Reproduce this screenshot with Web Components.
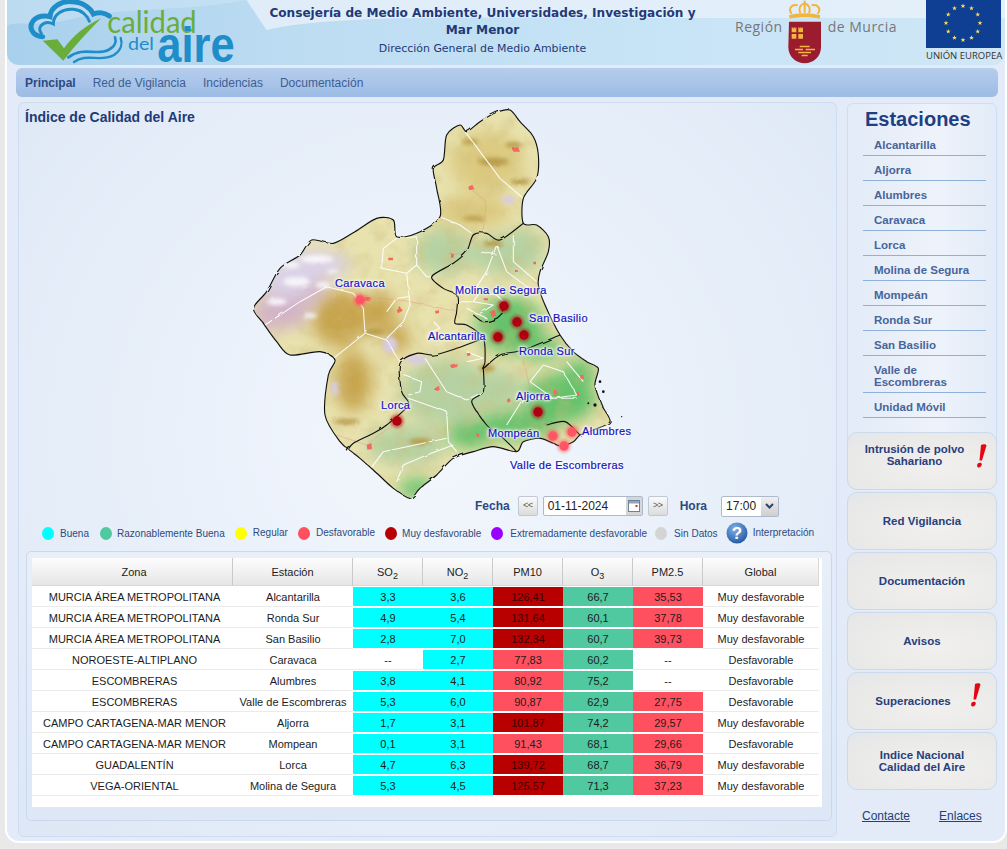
<!DOCTYPE html>
<html lang="es">
<head>
<meta charset="utf-8">
<title>Calidad del Aire</title>
<style>
  html, body { margin: 0; padding: 0; background: #e9e9e9; overflow: hidden; }
  body { font-family: "Liberation Sans", Arial, sans-serif; font-size: 12px; color: #222; height: 849px; }
</style>
</head>
<body>
<page-frame>
  <site-header></site-header>
  <site-nav></site-nav>
  <div style="display:flex;margin:5px 0 0 11px;gap:9px">
    <main-panel>
      <air-map></air-map>
      <date-bar></date-bar>
      <air-legend></air-legend>
      <air-table></air-table>
    </main-panel>
    <side-bar>
      <station-list></station-list>
      <side-button style="align-items:flex-start;padding:10px 15px 0 0">Intrusión de polvo<br>Sahariano<alert-mark style="right:9px;top:11px"></alert-mark></side-button>
      <side-button>Red Vigilancia</side-button>
      <side-button>Documentación</side-button>
      <side-button>Avisos</side-button>
      <side-button style="padding-right:18px">Superaciones<alert-mark style="right:15px;top:10px"></alert-mark></side-button>
      <side-button>Indice Nacional<br>Calidad del Aire</side-button>
      <foot-links></foot-links>
    </side-bar>
  </div>
</page-frame>

<script>
class PageFrame extends HTMLElement {
  constructor() {
    super();
    this.attachShadow({ mode: 'open' });
    this.shadowRoot.innerHTML = `
      <style>
        :host { display: block; margin-left: 5px; width: 1002px; height: 843px; box-sizing: border-box;
          background: #e2ebf7; border: 2px solid #fff; border-top: 0; border-radius: 0 0 14px 14px; overflow: hidden; }
      </style>
      <slot></slot>`;
  }
}

class SiteHeader extends HTMLElement {
  constructor() {
    super();
    this.attachShadow({ mode: 'open' });
    let stars = '';
    for (let i = 0; i < 12; i++) {
      const a = i * Math.PI / 6;
      const cx = 37 + 17 * Math.sin(a), cy = 23 - 17 * Math.cos(a);
      let pts = [];
      for (let k = 0; k < 10; k++) {
        const r = k % 2 ? 1 : 2.5, b = k * Math.PI / 5;
        pts.push((cx + r * Math.sin(b)).toFixed(1) + ',' + (cy - r * Math.cos(b)).toFixed(1));
      }
      stars += `<polygon points="${pts.join(' ')}"/>`;
    }
    this.shadowRoot.innerHTML = `
      <style>
        :host { display: flex; height: 65px; position: relative; border-radius: 0 0 12px 12px;
          background: linear-gradient(90deg, #a8d0ec 0, #bcdcf2 28%, #c6e3f6 60%, #cfe7f7 100%); }
        .sky { position: absolute; inset: 0; width: 100%; height: 100%; }
        .logo { position: relative; width: 233px; height: 65px; flex: none; overflow: visible; }
        .title { position: relative; width: 485px; flex: none; text-align: center; color: #1f3a78; }
        .title b { display: block; font: 700 12.1px/17px "DejaVu Sans", sans-serif; margin-top: 5px; white-space: nowrap; }
        .title span { display: block; font: 10.95px/14px "DejaVu Sans", sans-serif; margin-top: 3px; }
        .region { position: relative; display: flex; align-items: flex-start; margin-left: 10px; width: 162px; flex: none; color: #777;
          font: 500 14px/18px "Open Sans", sans-serif; letter-spacing: .5px; }
        .region i { font-style: normal; margin-top: 18px; white-space: nowrap; }
        .region svg { flex: none; margin: 0 3px 0 2px; }
        .eu { position: relative; margin-left: 29px; width: 75px; flex: none; text-align: center; }
        .eu span { display: block; font: 400 9.5px/12px "Open Sans", sans-serif; color: #333; margin-top: 2px; white-space: nowrap; }
        .eu svg { display: block; }
      </style>
      <svg class="sky" viewBox="0 0 1000 65" preserveAspectRatio="none">
        <path d="M240 0H1000V18H600C480 18 330 14 260 30Z" fill="#e6f0f9" opacity=".85"/>
        <path d="M0 0H240C180 12 120 6 60 20 30 28 10 20 0 26Z" fill="#cfe5f5" opacity=".5"/>
      </svg>
      <svg class="logo" viewBox="21 0 699 195" aria-label="Calidad del Aire">
        <path d="M128 110C95 108 85 80 100 62 112 48 135 45 150 50 152 20 185 2 215 5 245 5 270 22 280 42 295 35 315 38 328 48" fill="none" stroke="#1f8dc8" stroke-width="15" stroke-linecap="round"/>
        <path d="M124 100C108 78 135 60 160 72 160 42 190 25 220 28 245 30 262 46 268 64" fill="none" stroke="#1f8dc8" stroke-width="9" stroke-linecap="round"/>
        <path d="M128 122 172 118 192 145C220 105 260 75 303 55 265 95 225 135 190 182Z" fill="#6aad3a"/>
        <path d="M205 172C250 138 290 168 325 150 345 140 350 125 345 112" fill="none" stroke="#1f8dc8" stroke-width="8" stroke-linecap="round"/>
        <path d="M222 186C260 158 300 188 342 165 364 150 368 130 362 114" fill="none" stroke="#1f8dc8" stroke-width="7" stroke-linecap="round"/>
        <text x="322" y="100" font-family="Lato, 'Liberation Sans', sans-serif" font-size="90" fill="#6aad3a" textLength="268" lengthAdjust="spacingAndGlyphs">calidad</text>
        <text x="384" y="150" font-family="Lato, 'Liberation Sans', sans-serif" font-size="50" fill="#1f8dc8" textLength="78" lengthAdjust="spacingAndGlyphs">del</text>
        <text x="472" y="186" font-family="'Liberation Sans', sans-serif" font-weight="700" font-size="150" fill="#1f8dc8" textLength="232" lengthAdjust="spacingAndGlyphs">aire</text>
      </svg>
      <div class="title">
        <b>Consejería de Medio Ambiente, Universidades, Investigación y<br>Mar Menor</b>
        <span>Dirección General de Medio Ambiente</span>
      </div>
      <div class="region">
        <i>Región</i>
        <svg width="40" height="65" viewBox="170 0 120 195">
          <path d="M182 65H278V142C278 170 255 190 229 190 203 190 180 170 180 142Z" fill="#9b1c2e"/>
          <g fill="#f0b63f">
            <path d="M190 82h3v3h3v-3h3v3h3v-3h2v15h-14zM210 82h3v3h3v-3h3v3h3v-3h2v15h-14zM190 102h14v14h-14zM210 102h14v14h-14z"/>
            <path d="M214 137h30v5h-30zM200 146h24v5h-24zM232 146h28v5h-28zM210 155h38v5h-38zM220 164h18v5h-18z"/>
            <path d="M182 46C205 38 253 38 276 46L274 56C250 50 208 50 184 56Z"/>
          </g>
          <g fill="none" stroke="#f0b63f" stroke-width="6">
            <path d="M190 42C178 25 190 12 208 16"/>
            <path d="M268 42C280 25 268 12 250 16"/>
            <path d="M216 40C210 25 215 14 228 10 242 14 248 25 242 40"/>
            <path d="M229 2V38"/>
          </g>
        </svg>
        <i>de Murcia</i>
      </div>
      <div class="eu">
        <svg width="75" height="48" viewBox="0 0 75 48"><rect width="75" height="48" fill="#0f3f93"/><g fill="#ffe24a">${stars}</g></svg>
        <span>UNIÓN EUROPEA</span>
      </div>`;
  }
}

class SiteNav extends HTMLElement {
  constructor() {
    super();
    this.attachShadow({ mode: 'open' });
    const items = ['Principal', 'Red de Vigilancia', 'Incidencias', 'Documentación'];
    this.shadowRoot.innerHTML = `
      <style>
        :host { display: flex; align-items: center; gap: 17px; margin: 3px 0 0 9px; width: 973px; height: 29px; padding-left: 9px;
          background: linear-gradient(#b6cdec, #9cbce5); border-radius: 6px; color: #3e5e94; }
        a:first-of-type { font-weight: 700; color: #2a4a82; }
      </style>
      ${items.map(t => `<a>${t}</a>`).join('')}`;
  }
}

class MainPanel extends HTMLElement {
  constructor() {
    super();
    this.attachShadow({ mode: 'open' });
    this.shadowRoot.innerHTML = `
      <style>
        :host { display: block; width: 817px; height: 733px; flex: none; box-sizing: content-box; border: 1px solid #cddcf0; border-radius: 6px;
          background: radial-gradient(ellipse at 50% 45%, #f3f7fd 0, #e6eef9 60%, #dde7f5 100%); }
      </style>
      <slot></slot>`;
  }
}

// catmull-rom through a "x y x y ..." list, so that the borders don't look like polygons
function smooth(list, closed) {
  const n = list.trim().split(/[\s]+/).map(Number);
  const p = [];
  for (let i = 0; i < n.length; i += 2) p.push([n[i], n[i + 1]]);
  const at = i => closed ? p[(i + p.length) % p.length] : p[Math.max(0, Math.min(p.length - 1, i))];
  let d = `M${p[0][0]} ${p[0][1]}`;
  const last = closed ? p.length : p.length - 1;
  for (let i = 0; i < last; i++) {
    const a = at(i - 1), b = at(i), c = at(i + 1), e = at(i + 2);
    d += `C${(b[0] + (c[0] - a[0]) / 7).toFixed(1)} ${(b[1] + (c[1] - a[1]) / 7).toFixed(1)} ${(c[0] - (e[0] - b[0]) / 7).toFixed(1)} ${(c[1] - (e[1] - b[1]) / 7).toFixed(1)} ${c[0]} ${c[1]}`;
  }
  return d + (closed ? 'Z' : '');
}

class AirMap extends HTMLElement {
  constructor() {
    super();
    this.attachShadow({ mode: 'open' });
    const dark = '#b00010', red = '#ff5565';
    const pins = [
      [360, 300, red], [504, 306, dark], [517, 322, dark], [524, 335, dark], [498, 337, dark],
      [538, 412, dark], [397, 421, dark], [553, 436, red], [572, 432, red], [564, 446, red]
    ];
    const labels = [
      ['Caravaca', 335, 283], ['Molina de Segura', 455, 290], ['San Basilio', 529, 318], ['Alcantarilla', 428, 336],
      ['Ronda Sur', 519, 351], ['Aljorra', 516, 396], ['Lorca', 381, 405], ['Mompeán', 488, 433],
      ['Alumbres', 582, 431], ['Valle de Escombreras', 510, 465]
    ];
    const outline = smooth('660 60 680 80 720 50 770 22 810 15 840 50 880 95 895 150 890 220 850 280 850 355 890 360 925 395 925 440 900 500 895 540 915 600 960 690 1000 740 1040 770 1075 790 1065 840 1085 900 1110 950 1060 975 1020 990 1000 1010 960 1025 940 1015 900 1000 850 1010 830 1040 760 1025 700 1040 640 1060 590 1110 540 1150 510 1180 460 1150 400 1095 360 1060 335 1040 300 1010 255 930 265 810 285 765 240 740 150 750 110 710 70 655 40 610 80 560 120 490 180 450 215 405 280 415 345 380 410 340 460 345 470 395 530 385 600 335 590 250 580 190 610 165 620 90', true);
    const zones = [
      '850 355 780 405 740 385 700 390 680 440 640 475 575 515 610 550 650 570 650 620 645 655 680 660 730 700 735 770 730 790 780 750 850 735 960 690',
      '700 630 730 650 770 640 800 610',
      '730 790 730 860 695 890 740 960 790 1000 830 1040',
      '730 700 650 730 580 750 530 745 480 775 485 860 505 900 440 960 400 985 340 1015 320 1040',
      '920 960 975 950 1020 990'
    ];
    const blob = (c, list) => list.map(b => `<ellipse cx="${b[0]}" cy="${b[1]}" rx="${b[2]}" ry="${b[3]}" fill="${c}"/>`).join('');
    this.shadowRoot.innerHTML = `
      <style>
        :host { display: block; position: relative; height: 392px; }
        h1 { margin: 0; padding: 6px 0 0 6px; font-size: 14px; line-height: 16px; color: #1f3a78; position: relative; }
        svg { position: absolute; left: 221px; top: 2px; }
        span { position: absolute; font-size: 11px; line-height: 13px; letter-spacing: .35px; color: #1212bf; -webkit-text-stroke: .2px #1212bf; white-space: nowrap; transform: translateY(-50%);
          text-shadow: 0 0 2px #fff, 0 0 2px #fff, 0 0 3px #fff, 0 0 4px #fff, 0 0 5px #fff; }
      </style>
      <h1>Índice de Calidad del Aire</h1>
      <svg width="400" height="400" viewBox="0 0 1200 1200">
        <defs>
          <clipPath id="land"><path d="${outline}"/></clipPath>
          <filter id="soft" x="-20%" y="-20%" width="140%" height="140%"><feGaussianBlur stdDeviation="24"/></filter>
          <filter id="tight" x="-20%" y="-20%" width="140%" height="140%"><feGaussianBlur stdDeviation="6"/></filter>
          <filter id="relief" x="0" y="0" width="100%" height="100%">
            <feTurbulence type="fractalNoise" baseFrequency=".018" numOctaves="4" seed="7"/>
            <feColorMatrix values="0 0 0 0 .62  0 0 0 0 .5  0 0 0 0 .2  1.9 0 0 0 -.85"/>
          </filter>
          <filter id="rough" x="-5%" y="-5%" width="110%" height="110%">
            <feTurbulence type="fractalNoise" baseFrequency=".03" numOctaves="2" seed="3"/>
            <feDisplacementMap in="SourceGraphic" scale="8"/>
          </filter>
          <filter id="glow" x="-60%" y="-60%" width="220%" height="220%"><feGaussianBlur stdDeviation="4"/></filter>
        </defs>
        <g filter="url(#rough)">
          <g clip-path="url(#land)">
            <rect width="1200" height="1200" fill="#e8e2ae"/>
            <g filter="url(#soft)">
              ${blob('#dcca80', [[740, 170, 110, 90], [700, 320, 110, 50]])}
              ${blob('#b6d2a2', [[610, 440, 90, 70], [800, 450, 110, 60], [620, 860, 140, 100], [500, 1020, 120, 60], [770, 850, 80, 60], [850, 410, 60, 40]])}
              ${blob('#66c26c', [[810, 660, 100, 85], [900, 730, 70, 35], [960, 880, 110, 75], [830, 960, 120, 45], [690, 990, 70, 40], [530, 1150, 55, 30], [1020, 800, 45, 40]])}
              ${blob('#c7a44e', [[300, 640, 85, 85], [420, 620, 45, 60], [340, 830, 55, 90], [470, 700, 40, 40]])}
            </g>
            <rect width="1200" height="1200" filter="url(#relief)" opacity=".5"/>
            <g filter="url(#soft)">
              ${blob('#d2b4c6', [[130, 610, 85, 60], [90, 640, 50, 40], [200, 560, 65, 40]])}
              ${blob('#dbd2e8', [[220, 480, 110, 45], [140, 530, 70, 50]])}
            </g>
            <g filter="url(#tight)">
              ${blob('#f7f5fa', [[230, 462, 50, 12], [170, 530, 40, 14], [110, 590, 30, 10], [210, 632, 22, 7], [250, 540, 25, 9], [150, 480, 30, 10], [280, 500, 18, 6]])}
              ${blob('#d8cce0', [[805, 285, 20, 12], [450, 720, 22, 26], [530, 765, 32, 14], [285, 850, 12, 22]])}
              ${blob('#b89c4c', [[760, 170, 45, 12], [840, 230, 30, 9], [700, 340, 35, 7], [400, 680, 35, 10], [320, 950, 40, 8], [740, 790, 25, 10], [540, 1010, 35, 10], [760, 415, 30, 9], [690, 110, 25, 8], [820, 120, 25, 8]])}
            </g>
            <g fill="none" stroke="#e8938a" stroke-width="1.800" opacity=".75">
              <path d="M690 250 740 290 730 370 670 440 640 450"/><path d="M350 570 510 590 650 620"/><path d="M290 990 380 1020 470 950"/><path d="M850 760 880 900 920 960"/>
            </g>
            <g fill="none" stroke="#fff" stroke-width="3.200" stroke-linejoin="round" opacity=".92">
              <path d="M675 80 720 140 780 220 850 280"/><path d="M600 335 660 360 695 385"/>
              <path d="M530 395 530 480 560 515 575 515M430 430 425 490 500 505 530 480M430 430 470 400 530 395"/>
              <path d="M75 660 180 590 260 545 340 565 370 610 375 685 280 760M375 685 440 705 480 770"/>
              <path d="M500 505 510 600 490 650 440 700M440 620 470 580 505 575"/>
              <path d="M770 420 740 500 700 560M820 390 820 470 890 530M770 420 800 500 880 560M650 590 700 590 760 600 720 625M700 590 720 560 770 570 800 600M680 610 740 640M720 440 770 450"/>
              <path d="M555 760 620 860 680 885 730 860M490 810 545 830 540 860 505 870M505 880 620 920 625 1010 650 1040M385 1100 430 1040 620 1000M470 1130 490 1080 560 1050 640 1020"/>
              <path d="M870 830 910 780 970 800 1010 870 940 880 870 830M800 960 850 880 1010 880M980 770 1030 830M680 740 730 760 680 770M580 650 600 670 575 680"/>
            </g>
            <g fill="#f2695f">
              <path d="M818 130l16-4 6 14-20 0zM685 245l12-6 6 14-16 2zM630 445l12 2-2 12-10-4zM445 458h14v8h-14zM345 570l20 6 30 4-6 8-30-2zM470 615l12-8 6 10-14 8zM585 618l12-2v8l-10 2zM680 745l10-2 2 8-10 2zM630 780l20-6 2 12-18 4zM585 850l12-8 2 14-14 2zM800 885l8-6 4 10-8 4zM940 860l12-4 2 14-10 2zM1020 810l10 0 2 12-10 0zM1010 860l6-2 2 14-6 2zM380 1020l14-6 2 18-14 2zM530 1155l14-4 4 10-16 2zM710 985l8 2-2 10-6-2zM750 620l14-6 4 18-12 4zM730 580h14v6h-14zM880 470l8 0v8h-8zM825 495l8 0v6h-8z"/>
            </g>
          </g>
          <path d="${outline}" fill="none" stroke="#111" stroke-width="3.400" stroke-linejoin="round"/>
          <g fill="none" stroke="#111" stroke-width="3.400" stroke-linejoin="round">
            ${zones.map(z => `<path d="${smooth(z, false)}"/>`).join('')}
          </g>
        </g>
        <g fill="#111"><circle cx="1065" cy="900" r="5"/><circle cx="1045" cy="895" r="3"/><circle cx="1090" cy="860" r="4"/><circle cx="1145" cy="935" r="2"/><circle cx="1080" cy="830" r="4"/></g>
        ${pins.map(p => {
          const x = (p[0] - 240) * 3, y = (p[1] - 105) * 3;
          return `<circle cx="${x}" cy="${y}" r="20" fill="${p[2]}" opacity=".55" filter="url(#glow)"/><circle cx="${x}" cy="${y}" r="14" fill="${p[2]}"/>`;
        }).join('')}
      </svg>
      ${labels.map(l => `<span style="left:${l[1] - 19}px;top:${l[2] - 103}px">${l[0]}</span>`).join('')}`;
  }
}

class DateBar extends HTMLElement {
  constructor() {
    super();
    this.attachShadow({ mode: 'open' });
    this.shadowRoot.innerHTML = `
      <style>
        :host { display: flex; align-items: center; height: 22px; padding-left: 456px; color: #2c4a80; }
        b { font-size: 12px; font-weight: 700; }
        .btn { width: 18px; height: 18px; margin: 0 5px 0 8px; border: 1px solid #bfc9d6; border-radius: 2px; background: linear-gradient(#fafafa, #dcdcdc);
          font-size: 9px; line-height: 17px; text-align: center; color: #555; letter-spacing: -.5px; }
        .next { margin: 0 12px 0 5px; }
        .field { display: flex; align-items: stretch; height: 20px; box-sizing: border-box; border: 1px solid #aebacb; border-radius: 2px; background: #fff; color: #222; line-height: 18px; }
        .date { width: 100px; justify-content: space-between; padding-left: 4px; box-sizing: border-box; }
        .cal { width: 16px; background: #d6d6d6; display: flex; align-items: center; justify-content: center; }
        .time { width: 58px; margin-left: 14px; padding-left: 4px; justify-content: space-between; box-sizing: border-box; height: 21px; }
        .arrow { width: 17px; background: linear-gradient(#efefef, #cfcfcf); display: flex; align-items: center; justify-content: center; }
      </style>
      <b>Fecha</b>
      <div class="btn">&lt;&lt;</div>
      <div class="field date">01-11-2024
        <div class="cal"><svg width="12" height="12" viewBox="0 0 12 12"><rect x=".5" y=".5" width="11" height="11" fill="#fff" stroke="#6f8096"/><rect x="1" y="1" width="10" height="2.5" fill="#8fa5bd"/><rect x="7.5" y="5" width="2" height="2" fill="#c33"/></svg></div>
      </div>
      <div class="btn next">&gt;&gt;</div>
      <b>Hora</b>
      <div class="field time">17:00
        <div class="arrow"><svg width="9" height="6" viewBox="0 0 9 6"><path d="M1 1 4.500 4.500 8 1" fill="none" stroke="#25457a" stroke-width="2"/></svg></div>
      </div>`;
  }
}

class AirLegend extends HTMLElement {
  constructor() {
    super();
    this.attachShadow({ mode: 'open' });
    const items = [
      ['Buena', '#00ffff', 0, 11, 6], ['Razonablemente Buena', '#50c8a0', 0, 10, 5], ['Regular', '#ffff00', -1, 10, 6], ['Desfavorable', '#ff5060', -1, 10, 6],
      ['Muy desfavorable', '#b90000', 0, 10, 5], ['Extremadamente desfavorable', '#9900ff', 0, 8, 7], ['Sin Datos', '#d4d4d4', 0, 8, 7]
    ];
    this.shadowRoot.innerHTML = `
      <style>
        :host { display: flex; align-items: center; height: 22px; margin-top: 5px; padding-left: 23px; color: #2c4a80; font-size: 10px; white-space: nowrap; letter-spacing: .02px; }
        i { width: 12px; height: 13px; border-radius: 50%; flex: none; }
        span { display: block; }
        svg { flex: none; margin-right: 5px; }
      </style>
      ${items.map(t => `<i style="background:${t[1]};margin-right:${t[4]}px"></i><span style="margin-right:${t[3]}px;position:relative;top:${t[2]}px">${t[0]}</span>`).join('')}
      <svg width="22" height="22" viewBox="0 0 22 22" role="img" aria-label="Ayuda">
        <defs><radialGradient id="h" cx=".4" cy=".3" r=".8"><stop offset="0" stop-color="#7fb2ea"/><stop offset="1" stop-color="#1c4f9c"/></radialGradient></defs>
        <circle cx="11" cy="11" r="10.500" fill="url(#h)"/>
        <text x="11" y="17" text-anchor="middle" font-family="'Liberation Sans',sans-serif" font-weight="700" font-size="17" fill="#fff">?</text>
      </svg>
      <span style="position:relative;top:-1px">Interpretación</span>`;
  }
}

class AirTable extends HTMLElement {
  constructor() {
    super();
    this.attachShadow({ mode: 'open' });
    const M = 'MURCIA ÁREA METROPOLITANA', E = 'ESCOMBRERAS', C = 'CAMPO CARTAGENA-MAR MENOR';
    const rows = [
      [M, 'Alcantarilla', '3,3', '3,6', '126,41', '66,7', '35,53', 'Muy desfavorable'],
      [M, 'Ronda Sur', '4,9', '5,4', '131,64', '60,1', '37,78', 'Muy desfavorable'],
      [M, 'San Basilio', '2,8', '7,0', '132,34', '60,7', '39,73', 'Muy desfavorable'],
      ['NOROESTE-ALTIPLANO', 'Caravaca', '--', '2,7', '77,83', '60,2', '--', 'Desfavorable'],
      [E, 'Alumbres', '3,8', '4,1', '80,92', '75,2', '--', 'Desfavorable'],
      [E, 'Valle de Escombreras', '5,3', '6,0', '90,87', '62,9', '27,75', 'Desfavorable'],
      [C, 'Aljorra', '1,7', '3,1', '101,87', '74,2', '29,57', 'Muy desfavorable'],
      [C, 'Mompean', '0,1', '3,1', '91,43', '68,1', '29,66', 'Desfavorable'],
      ['GUADALENTÍN', 'Lorca', '4,7', '6,3', '139,72', '68,7', '36,79', 'Muy desfavorable'],
      ['VEGA-ORIENTAL', 'Molina de Segura', '5,3', '4,5', '125,57', '71,3', '37,23', 'Muy desfavorable']
    ];
    // column index -> class of the cell by value
    const level = (i, v) => {
      if (v === '--') return '';
      if (i === 2 || i === 3) return 'good';
      if (i === 5) return 'fair';
      if (i === 4) return parseFloat(v) > 100 ? 'vbad' : 'bad';
      if (i === 6) return 'bad';
      return '';
    };
    const heads = ['Zona', 'Estación', 'SO<sub>2</sub>', 'NO<sub>2</sub>', 'PM10', 'O<sub>3</sub>', 'PM2.5', 'Global'];
    this.shadowRoot.innerHTML = `
      <style>
        :host { display: block; margin: 7px 0 0 7px; width: 790px; height: 249px; padding: 6px 9px 13px 5px; border: 1px solid #c9d8ee; border-radius: 5px;
          background: linear-gradient(#e8eff9, #dde7f5); }
        .sheet { background: #fff; height: 249px; width: 790px; }
        table { border-collapse: separate; border-spacing: 0; table-layout: fixed; width: 787px; font-size: 11px; color: #1c1c1c; }
        th { height: 26px; padding: 1px 0 0; font-weight: 400; background: linear-gradient(#fdfdfd, #e6e6e6); border-right: 1px solid #c9c9c9; border-bottom: 1px solid #d8d8d8; }
        th:last-child { border-right: 1px solid #d8d8d8; }
        th:first-child, td:first-child { padding-left: 4px; }
        sub { font-size: 9px; line-height: 0; }
        td { height: 19px; padding: 0; text-align: center; white-space: nowrap; border-top: 1px solid #fff; border-bottom: 1px solid #ebebeb; }
        .good, .fair, .bad, .vbad { border-bottom-color: #fff; }
        .good { background: #00ffff; }
        .fair { background: #50c8a0; }
        .bad { background: #ff5060; }
        .vbad { background: #b90000; color: #3a0000; }
      </style>
      <div class="sheet">
        <table>
          <colgroup><col style="width:201px"><col style="width:120px"><col style="width:70px"><col style="width:70px"><col style="width:70px"><col style="width:70px"><col style="width:70px"><col></colgroup>
          <thead><tr>${heads.map(h => `<th>${h}</th>`).join('')}</tr></thead>
          <tbody>
            ${rows.map(r => `<tr>${r.map((v, i) => `<td class="${level(i, v)}">${v}</td>`).join('')}</tr>`).join('')}
          </tbody>
        </table>
      </div>`;
  }
}

class SideBar extends HTMLElement {
  constructor() {
    super();
    this.attachShadow({ mode: 'open' });
    this.shadowRoot.innerHTML = `
      <style>
        :host { display: flex; flex-direction: column; gap: 2px; width: 152px; flex: none; }
      </style>
      <slot></slot>`;
  }
}

class StationList extends HTMLElement {
  constructor() {
    super();
    this.attachShadow({ mode: 'open' });
    const names = ['Alcantarilla', 'Aljorra', 'Alumbres', 'Caravaca', 'Lorca', 'Molina de Segura', 'Mompeán', 'Ronda Sur', 'San Basilio', 'Valle de<br>Escombreras', 'Unidad Móvil'];
    this.shadowRoot.innerHTML = `
      <style>
        :host { display: block; height: 344px; margin: 1px 0 -17px 1px; width: 150px; border: 1px solid #d0def1; border-radius: 6px; padding-left: 15px; box-sizing: border-box;
          background: linear-gradient(90deg, #e2ebf7, #eef3fb 60%, #e2ebf7); }
        h2 { margin: 0; padding-left: 2px; font-size: 20px; line-height: 23px; padding-top: 4px; color: #1f3f85; }
        a { display: block; width: 123px; box-sizing: border-box; padding: 8px 0 4px 11px; border-bottom: 1px solid #8fb0d8; font-weight: 700; font-size: 11.5px; line-height: 12px; color: #47659b; }
      </style>
      <h2>Estaciones</h2>
      ${names.map(n => `<a>${n}</a>`).join('')}`;
  }
}

class SideButton extends HTMLElement {
  constructor() {
    super();
    this.attachShadow({ mode: 'open' });
    this.shadowRoot.innerHTML = `
      <style>
        :host { display: flex; align-items: center; justify-content: center; position: relative; box-sizing: border-box; width: 150px; height: 58px; margin-left: 1px;
          border: 1px solid #cbd9ec; border-radius: 10px; text-align: center; font-weight: 700; font-size: 11.5px; line-height: 12px; color: #27407c;
          background: radial-gradient(ellipse at 60% 60%, #f1f0ef 0, #e9e9e8 70%, #e4e6e9 100%); }
      </style>
      <div><slot></slot></div>`;
  }
}

class AlertMark extends HTMLElement {
  constructor() {
    super();
    this.attachShadow({ mode: 'open' });
    this.shadowRoot.innerHTML = `
      <style>
        :host { position: absolute; display: block; width: 11px; height: 24px; }
      </style>
      <svg width="11" height="24" viewBox="0 0 11 24"><path d="M5 1C7 0 10 0 10.500 1.500L6 16.500H3.500ZM1.800 19.500C3 18.500 5.500 18.700 5.800 20 6 22 4 23.800 2.300 23.500 .8 23.200 .8 20.500 1.800 19.500Z" fill="#e30613"/></svg>`;
  }
}

class FootLinks extends HTMLElement {
  constructor() {
    super();
    this.attachShadow({ mode: 'open' });
    this.shadowRoot.innerHTML = `
      <style>
        :host { display: flex; gap: 29px; padding: 17px 0 0 16px; color: #23407a; }
        a { text-decoration: underline; }
      </style>
      <a>Contacte</a><a>Enlaces</a>`;
  }
}

customElements.define('page-frame', PageFrame);
customElements.define('site-header', SiteHeader);
customElements.define('site-nav', SiteNav);
customElements.define('main-panel', MainPanel);
customElements.define('air-map', AirMap);
customElements.define('date-bar', DateBar);
customElements.define('air-legend', AirLegend);
customElements.define('air-table', AirTable);
customElements.define('side-bar', SideBar);
customElements.define('station-list', StationList);
customElements.define('side-button', SideButton);
customElements.define('alert-mark', AlertMark);
customElements.define('foot-links', FootLinks);
</script>
</body>
</html>
